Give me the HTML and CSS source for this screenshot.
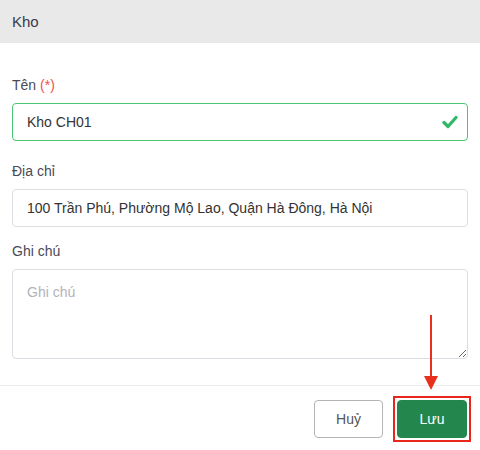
FILE: index.html
```html
<!DOCTYPE html>
<html lang="vi">
<head>
<meta charset="utf-8">
<link rel="stylesheet" href="styles.css">
</head>
<body>
<div class="modal">
  <div class="modal-header">Kho</div>
  <div class="modal-body">
    <div class="field">
      <label class="label">Tên <span class="req">(*)</span></label>
      <div class="control">
        <input class="input is-success" type="text" value="Kho CH01">
        <svg class="check" width="16" height="14" viewBox="0 0 16 14"><path d="M2 7.5 L6 11.5 L14 2.5" fill="none" stroke="#2fb865" stroke-width="3.2" stroke-linecap="round" stroke-linejoin="round"/></svg>
      </div>
    </div>
    <div class="field">
      <label class="label">Địa chỉ</label>
      <div class="control">
        <input class="input" type="text" value="100 Trần Phú, Phường Mộ Lao, Quận Hà Đông, Hà Nội">
      </div>
    </div>
    <div class="field field-last">
      <label class="label">Ghi chú</label>
      <div class="control">
        <textarea class="textarea" placeholder="Ghi chú"></textarea>
      </div>
    </div>
  </div>
  <div class="modal-footer">
    <button class="btn btn-cancel">Huỷ</button>
    <span class="highlight"><button class="btn btn-save">Lưu</button></span>
  </div>
  <svg class="arrow" width="20" height="80" viewBox="0 0 20 80"><line x1="10" y1="1" x2="10" y2="64" stroke="#e8301c" stroke-width="2"/><path d="M3 62 L17 62 L10 76 Z" fill="#e8301c"/></svg>
</div>
</body>
</html>
```
FILE: styles.css
```css
* { box-sizing: border-box; }
html, body { margin: 0; padding: 0; background: #fff; }
body { font-family: "Liberation Sans", Arial, sans-serif; color: #363640; }
.modal { position: relative; width: 480px; height: 450px; overflow: hidden; }
.modal-header {
  height: 43px; background: #e9e9ea; padding: 0 12px;
  display: flex; align-items: center; font-size: 15px; color: #3a3a48;
}
.modal-body { padding: 32px 12px 26px; display: flex; flex-direction: column; }
.field { display: flex; flex-direction: column; gap: 8px; margin-bottom: 20px; }
.field + .field-last { margin-top: -6px; }
.field-last { margin-bottom: 0; }
.label { font-size: 14px; line-height: 20px; color: #4a4a55; }
.req { color: #ef5350; }
.control { position: relative; }
.input {
  width: 100%; height: 38px; border: 1px solid #dcdce2; border-radius: 4px;
  padding: 0 14px; font: 14px "Liberation Sans", Arial, sans-serif; color: #333;
  background: #fff; outline: none;
}
.input.is-success { border-color: #48c774; padding-right: 40px; }
.check { position: absolute; right: 10px; top: 12px; }
.textarea {
  display: block; width: 100%; height: 90px; border: 1px solid #dcdce2; border-radius: 4px;
  padding: 12px 14px; font: 14px/20px "Liberation Sans", Arial, sans-serif; color: #333;
  resize: vertical; outline: none;
}
.textarea::placeholder { color: #b2b2ba; }
.modal-footer {
  border-top: 1px solid #ececef; padding: 10px 9px 0;
  display: flex; justify-content: flex-end; align-items: center; gap: 10px;
}
.btn {
  display: block; height: 38px; border-radius: 4px; font: 14px "Liberation Sans", Arial, sans-serif;
  padding: 0; cursor: pointer;
}
.btn-cancel { width: 69px; background: #fff; border: 1px solid #b5b5b5; color: #555; }
.highlight { display: block; border: 2px solid #e8271c; padding: 2px; }
.btn-save { width: 70px; background: #23874d; border: 1px solid #23874d; color: #fff; }
.arrow { position: absolute; left: 421px; top: 314px; }
```
